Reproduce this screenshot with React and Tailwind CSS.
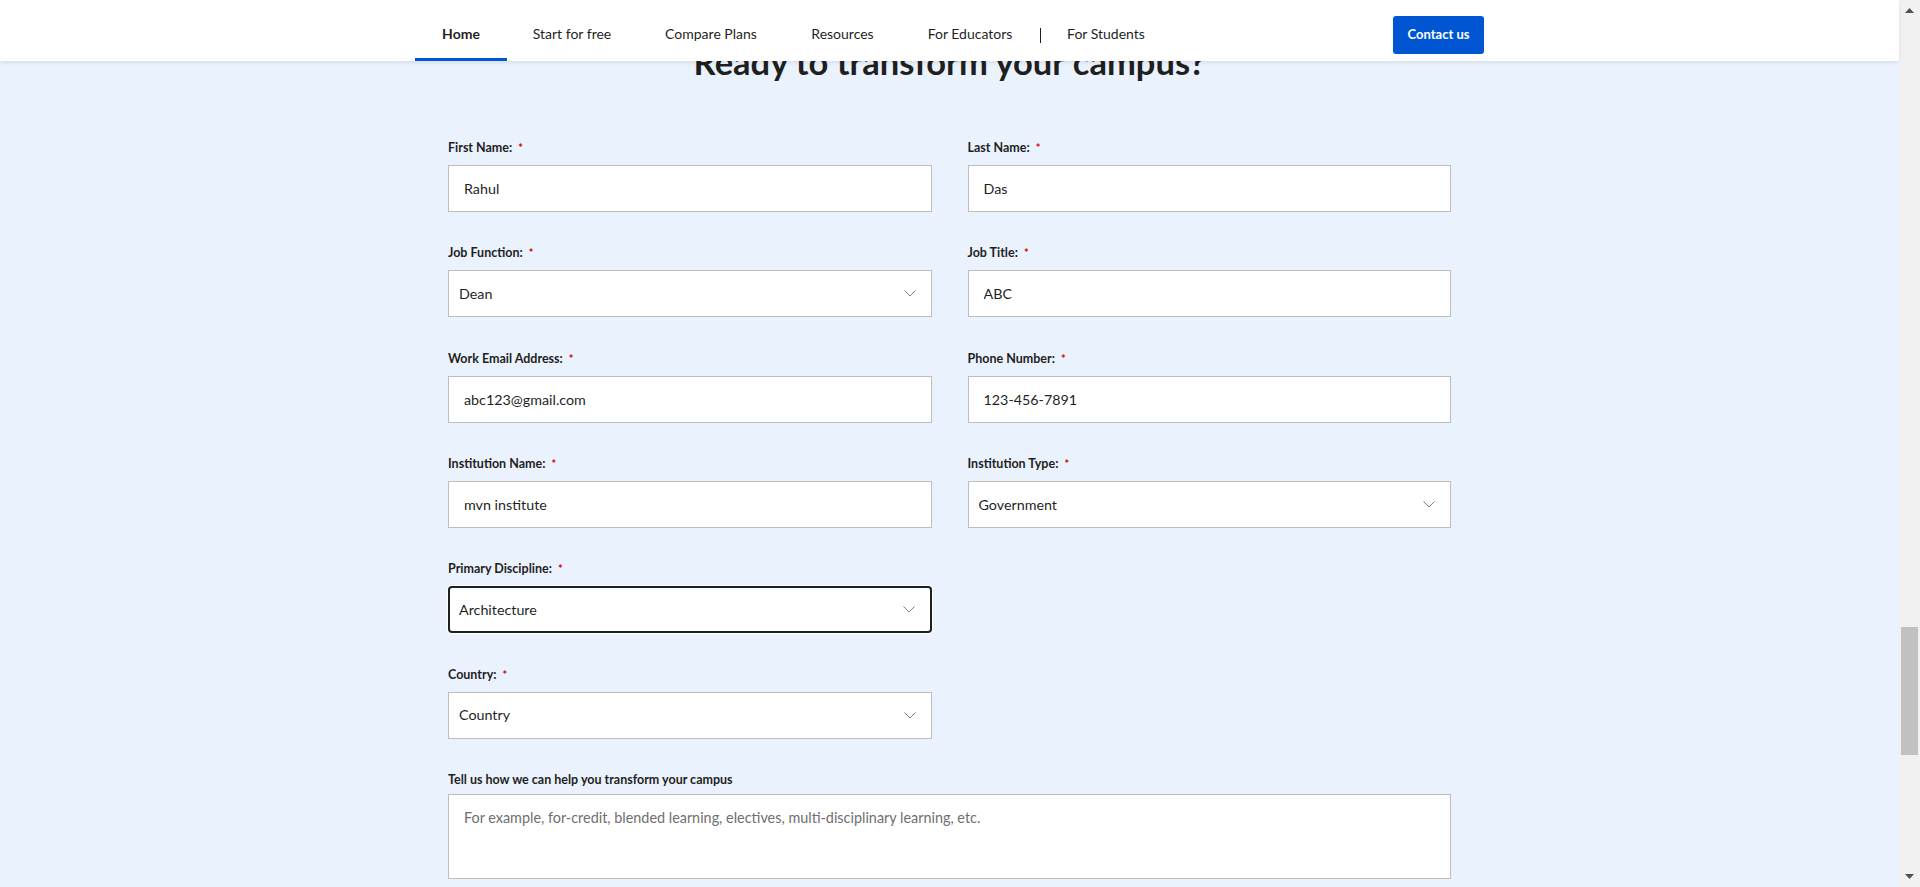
import React from "react";

function Chevron() {
  return (
    <svg width="12" height="7" viewBox="0 0 12 7" fill="none" className="shrink-0">
      <path d="M0.5 0.5 L6 6 L11.5 0.5" stroke="#7d7d7d" strokeWidth="1" />
    </svg>
  );
}

function Label({ children, required = true, className = "" }) {
  return (
    <div className={"h-[18px] text-[12.5px] font-bold leading-[18px] text-[#1f1f1f] " + className}>
      {children}
      {required && <span className="ml-[6px] align-top text-[11px] text-[#d30001]">*</span>}
    </div>
  );
}

function TextField({ label, value, className = "" }) {
  return (
    <div className={"flex flex-col " + className}>
      <Label>{label}</Label>
      <input
        readOnly
        value={value}
        className="mt-[8px] h-[47px] w-full border border-[#bdbdbd] bg-white px-[15px] text-[14.3px] text-[#1f1f1f] outline-none"
      />
    </div>
  );
}

function SelectField({ label, value, focused = false, className = "" }) {
  return (
    <div className={"flex flex-col " + className}>
      <Label>{label}</Label>
      <div
        className={
          "mt-[8px] flex h-[47px] w-full items-center justify-between bg-white pr-[15px] text-[14.3px] text-[#1f1f1f] " +
          (focused
            ? "rounded-[4px] border-2 border-[#1f1f1f] pl-[9px] shadow-[0_0_0_1px_#ffffff]"
            : "border border-[#bdbdbd] pl-[10px]")
        }
      >
        <span>{value}</span>
        <Chevron />
      </div>
    </div>
  );
}

const navItems = [
  { name: "Home", w: "w-[92px]", active: true },
  { name: "Start for free", w: "w-[130px]" },
  { name: "Compare Plans", w: "w-[148px]" },
  { name: "Resources", w: "w-[115px]" },
  { name: "For Educators", w: "w-[140px]" },
];

export default function App() {
  return (
    <div className="flex h-[887px] w-[1920px] overflow-hidden bg-[#eaf2fd] font-['Lato','Liberation_Sans',sans-serif] text-[#1f1f1f]">
      <div className="flex min-w-0 flex-1 flex-col">
        <header className="relative z-10 h-[61px] shrink-0 bg-white shadow-[0_2px_4px_rgba(0,0,0,0.08)]">
          <div className="mx-auto flex h-full w-[1069px] justify-between">
            <nav className="flex h-full">
              {navItems.map((item) => (
                <a
                  key={item.name}
                  className={
                    "flex h-full items-center justify-center border-b-[3px] pt-[8px] text-[14px] " +
                    item.w +
                    (item.active ? " border-[#0056d2] font-bold" : " border-transparent")
                  }
                >
                  {item.name}
                </a>
              ))}
              <div className="mt-[28px] h-[15px] w-px bg-[#1f1f1f]" />
              <a className="flex h-full w-[130px] items-center justify-center border-b-[3px] border-transparent pt-[8px] text-[14px]">
                For Students
              </a>
            </nav>
            <button className="mt-[16px] flex h-[38px] w-[91px] items-center justify-center rounded-[3px] bg-[#0056d2] text-[13px] font-bold text-white">
              Contact us
            </button>
          </div>
        </header>

        <main className="min-h-0 flex-1">
          <div className="mx-auto w-[1003px]">
            <h1 className="mt-[-19px] mb-[57px] text-center text-[34.5px] font-bold leading-[40px] text-[#1f1f1f]">
              Ready to transform your campus?
            </h1>
            <div className="grid grid-cols-2 gap-x-[36px] gap-y-[32.33px]">
              <TextField label="First Name:" value="Rahul" />
              <TextField label="Last Name:" value="Das" />
              <SelectField label="Job Function:" value="Dean" />
              <TextField label="Job Title:" value="ABC" />
              <TextField label="Work Email Address:" value="abc123@gmail.com" />
              <TextField label="Phone Number:" value="123-456-7891" />
              <TextField label="Institution Name:" value="mvn institute" />
              <SelectField label="Institution Type:" value="Government" />
              <SelectField className="col-start-1" label="Primary Discipline:" value="Architecture" focused />
              <SelectField className="col-start-1" label="Country:" value="Country" />
              <div className="col-span-2 flex flex-col">
                <Label required={false}>Tell us how we can help you transform your campus</Label>
                <textarea
                  readOnly
                  placeholder="For example, for-credit, blended learning, electives, multi-disciplinary learning, etc."
                  className="mt-[5px] h-[85px] w-full resize-none border border-[#bdbdbd] bg-white px-[15px] py-[12px] text-[14.4px] text-[#1f1f1f] outline-none placeholder:text-[#6f6f6f]"
                />
              </div>
            </div>
          </div>
        </main>
      </div>

      <div className="flex h-full w-[21px] shrink-0 flex-col bg-[#f1f1f1]">
        <div className="flex h-[21px] items-center justify-center">
          <svg width="9" height="5" viewBox="0 0 9 5">
            <path d="M4.5 0 L9 5 L0 5 Z" fill="#505050" />
          </svg>
        </div>
        <div className="flex-1">
          <div className="mx-[2px] mt-[606px] h-[128px] bg-[#c1c1c1]" />
        </div>
        <div className="flex h-[21px] items-center justify-center">
          <svg width="9" height="5" viewBox="0 0 9 5">
            <path d="M0 0 L9 0 L4.5 5 Z" fill="#505050" />
          </svg>
        </div>
      </div>
    </div>
  );
}
